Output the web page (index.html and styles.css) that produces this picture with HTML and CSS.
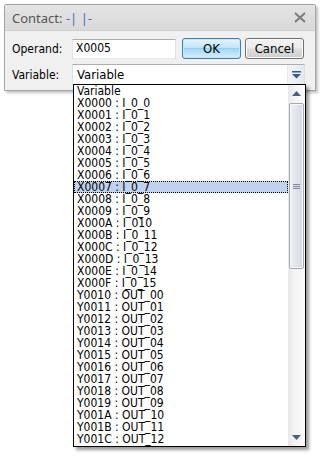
FILE: index.html
```html
<!DOCTYPE html>
<html>
<head>
<meta charset="utf-8">
<link rel="stylesheet" href="styles.css">
</head>
<body>
<div class="window">
  <div class="titlebar">
    <span class="title">Contact: <span class="sym">-| |-</span></span>
    <svg class="close" width="12" height="11" viewBox="0 0 12 11"><path d="M1 1 L11 10 M11 1 L1 10" stroke="#7b7b7b" stroke-width="2" fill="none"/></svg>
  </div>
  <div class="client">
    <div class="row">
      <span class="label">Operand:</span>
      <div class="input">X0005</div>
      <div class="btn ok">OK</div>
      <div class="btn cancel">Cancel</div>
    </div>
    <div class="row">
      <span class="label">Variable:</span>
      <div class="combo">
        <span class="combo-text">Variable</span>
        <span class="combo-btn"><svg width="9" height="8" viewBox="0 0 9 8"><rect x="0" y="0" width="9" height="1.5" fill="#3b5b8c"/><path d="M0 3 L9 3 L4.5 7.5 Z" fill="#3b5b8c"/></svg></span>
      </div>
    </div>
  </div>
</div>
<div class="dropdown">
  <div class="items">
    <div class="item">Variable</div>
    <div class="item">X0000 : I_0_0</div>
    <div class="item">X0001 : I_0_1</div>
    <div class="item">X0002 : I_0_2</div>
    <div class="item">X0003 : I_0_3</div>
    <div class="item">X0004 : I_0_4</div>
    <div class="item">X0005 : I_0_5</div>
    <div class="item">X0006 : I_0_6</div>
    <div class="item sel">X0007 : I_0_7</div>
    <div class="item">X0008 : I_0_8</div>
    <div class="item">X0009 : I_0_9</div>
    <div class="item">X000A : I_010</div>
    <div class="item">X000B : I_0_11</div>
    <div class="item">X000C : I_0_12</div>
    <div class="item">X000D : I_0_13</div>
    <div class="item">X000E : I_0_14</div>
    <div class="item">X000F : I_0_15</div>
    <div class="item">Y0010 : OUT_00</div>
    <div class="item">Y0011 : OUT_01</div>
    <div class="item">Y0012 : OUT_02</div>
    <div class="item">Y0013 : OUT_03</div>
    <div class="item">Y0014 : OUT_04</div>
    <div class="item">Y0015 : OUT_05</div>
    <div class="item">Y0016 : OUT_06</div>
    <div class="item">Y0017 : OUT_07</div>
    <div class="item">Y0018 : OUT_08</div>
    <div class="item">Y0019 : OUT_09</div>
    <div class="item">Y001A : OUT_10</div>
    <div class="item">Y001B : OUT_11</div>
    <div class="item">Y001C : OUT_12</div>
  </div>
  <div class="scrollbar">
    <div class="arrow"><svg width="9" height="5" viewBox="0 0 9 5"><path d="M0 5 L9 5 L4.5 0 Z" fill="#4b5f80"/></svg></div>
    <div class="track">
      <div class="thumb"><span class="grip"></span></div>
    </div>
    <div class="arrow"><svg width="9" height="5" viewBox="0 0 9 5"><path d="M0 0 L9 0 L4.5 5 Z" fill="#4b5f80"/></svg></div>
  </div>
</div>
</body>
</html>
```
FILE: styles.css
```css
html, body { margin: 0; padding: 0; background: #ffffff; }
body { width: 322px; height: 457px; position: relative; overflow: hidden; }

.window {
  margin: 4px 0 0 4px;
  width: 310px;
  border: 1px solid #a4a4a4;
  border-radius: 2px 2px 0 0;
  background: #f0f0f0;
  box-shadow: 2px 2px 3px rgba(0,0,0,0.25);
}
.titlebar {
  height: 25px;
  display: flex;
  align-items: center;
  justify-content: space-between;
  padding: 0 9px 0 7px;
  background: linear-gradient(#e4e4e4, #d9d9d9);
  border-bottom: 1px solid #cfcfcf;
}
.title {
  font-family: "Noto Sans", "Open Sans", sans-serif;
  font-size: 13px;
  color: #555555;
}
.title .sym { color: #3f6fb8; }
.close { display: block; }

.client {
  padding: 7px 10px 5px 7px;
  display: flex;
  flex-direction: column;
  gap: 5px;
  font-family: "DejaVu Sans Condensed", "Liberation Sans", sans-serif;
  font-size: 12px;
  color: #000;
}
.row { display: flex; align-items: center; height: 21px; }
.label { width: 60px; flex: none; }
.input {
  width: 99px;
  height: 18px;
  border: 1px solid #abadb3;
  border-color: #abadb3 #dbdfe6 #e3e9ef #e2e3ea;
  background: #fff;
  padding-left: 3px;
  line-height: 17px;
  box-sizing: content-box;
}
.btn {
  box-sizing: border-box;
  height: 21px;
  width: 59px;
  border-radius: 3px;
  display: flex;
  align-items: center;
  justify-content: center;
  font-size: 13px;
}
.ok {
  margin-left: 6px;
  border: 1px solid #3c7fb1;
  background: linear-gradient(#e5f4fc 0%, #c4e5f6 45%, #98d1ef 50%, #a8d8f2 55%, #d6eefb 100%);
  box-shadow: inset 0 0 0 1px #c8e6f8;
}
.cancel {
  margin-left: 4px;
  border: 1px solid #707070;
  background: linear-gradient(#f2f2f2 0%, #ebebeb 48%, #dddddd 52%, #cfcfcf 100%);
  box-shadow: inset 0 0 0 1px #fbfbfb;
}
.combo {
  width: 233px;
  height: 21px;
  box-sizing: border-box;
  border: 1px solid #abadb3;
  border-color: #abadb3 #dbdfe6 #e3e9ef #e2e3ea;
  background: #fff;
  display: flex;
  align-items: center;
  justify-content: space-between;
  font-size: 13px;
}
.combo-text { padding-left: 4px; }
.combo-btn {
  width: 16px;
  height: 19px;
  display: flex;
  align-items: center;
  justify-content: center;
  background: linear-gradient(90deg, #f2f4f7, #e4e9f0);
  border-left: 1px solid #e6e9ee;
}

.dropdown {
  position: absolute;
  left: 73px;
  top: 84px;
  width: 233px;
  height: 363px;
  box-sizing: border-box;
  border: 1px solid #000;
  background: #fff;
  display: flex;
  box-shadow: 3px 3px 3px rgba(0,0,0,0.4);
  font-family: "DejaVu Sans Condensed", "Liberation Sans", sans-serif;
  font-size: 12px;
  color: #000;
}
.items { flex: 1; overflow: hidden; }
.item {
  height: 12px;
  line-height: 12px;
  padding-left: 3px;
  white-space: nowrap;
  box-sizing: border-box;
}
.item.sel {
  background: #c1d2ee;
  outline: 1px dotted #000;
  outline-offset: -1px;
}
.scrollbar {
  width: 17px;
  flex: none;
  display: flex;
  flex-direction: column;
  background: linear-gradient(90deg, #e9e9e9, #f4f4f4 40%, #fbfbfb);
}
.arrow {
  height: 17px;
  display: flex;
  align-items: center;
  justify-content: center;
}
.track { flex: 1; padding-top: 1px; }
.thumb {
  margin: 0 1px;
  height: 166px;
  box-sizing: border-box;
  border: 1px solid #a2a8b3;
  border-radius: 2px;
  background: linear-gradient(90deg, #eef1f5, #dfe4ec 50%, #d2d8e2);
  box-shadow: inset 0 0 0 1px #f7f9fb;
  display: flex;
  align-items: center;
  justify-content: center;
}
.grip {
  width: 7px;
  height: 5px;
  background: repeating-linear-gradient(#7e8797 0 1px, transparent 1px 2px);
}
```
